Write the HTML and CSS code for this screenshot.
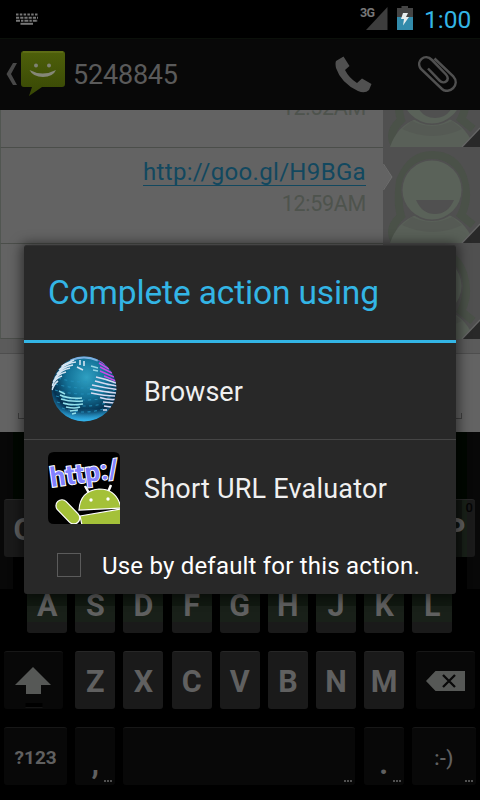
FILE: index.html
```html
<!DOCTYPE html>
<html lang="en">
<head>
<meta charset="utf-8">
<title>Complete action using</title>
<link rel="stylesheet" href="styles.css">
</head>
<body>
<svg width="0" height="0" class="defs">
  <symbol id="avatar" viewBox="0 0 97 96">
    <rect width="97" height="96" fill="#505050"/>
    <path d="M12 94Q4 82 18 69Q14 56 17 34Q27 8 49 8Q72 8 80 30Q87 51 78 68L90 78" fill="none" stroke="#4a5148" stroke-width="8"/>
    <path d="M7 96Q14 75 33 68H66Q84 76 91 96Z" fill="#596058"/>
    <path d="M29 70Q49 80 69 70L79 78Q50 92 19 78Z" fill="#555a54"/>
    <circle cx="49" cy="43" r="31" fill="#505050"/>
    <circle cx="49" cy="43" r="29.5" fill="#5a6259"/>
    <path d="M33 53H71Q65 67 52 67Q39 67 33 53Z" fill="#505050"/>
    <path d="M79 96L97 77V96Z" fill="#292929"/>
    <path d="M79 96L97 77" stroke="#656565" stroke-width="1.3"/>
  </symbol>
</svg>
<div class="screen">
  <header class="status">
    <svg class="kbd-icon" width="22" height="12" viewBox="0 0 22 12" stroke="#777" stroke-width="2" fill="none">
      <path d="M0 1.5H22" stroke-dasharray="2.5 1.3"/><path d="M0 4.7H22" stroke-dasharray="3.2 1"/><path d="M0 7.8H22" stroke-dasharray="4 1 2.4 1"/><path d="M4.5 10.8H17"/>
    </svg>
    <div class="signal"><span class="net">3G</span><svg width="22" height="23" viewBox="0 0 22 23"><path d="M0 23L21.500 0V23Z" fill="#3d3d3d"/></svg></div>
    <svg class="battery" width="16" height="24" viewBox="0 0 16 24">
      <path d="M0 2H4.500V0H11V2H16V12H0Z" fill="#444"/><path d="M0 11H16V24H0Z" fill="#328bab"/>
      <path d="M6 7H11L9 11H12L6 19.500L7 13H4Z" fill="#e8eeee"/>
    </svg>
    <span class="clock">1:00</span>
  </header>
  <nav class="bar">
    <svg class="back" width="12" height="22" viewBox="0 0 12 22"><path d="M7 0H11L5 11L11 22H7L0.500 11Z" fill="#484848"/></svg>
    <svg class="msg" width="44" height="46" viewBox="0 0 44 46">
      <defs><linearGradient id="mg" x2="0" y2="1"><stop stop-color="#4e600a"/><stop offset="1" stop-color="#384705"/></linearGradient></defs>
      <path d="M3 0H41Q44 0 44 3V33Q44 36 41 36H21L8 45L11 36H3Q0 36 0 33V3Q0 0 3 0Z" fill="url(#mg)"/>
      <path d="M2 1H42" stroke="#6c7821"/>
      <circle cx="15" cy="14.500" r="2" fill="#7f8274"/><circle cx="28" cy="14.500" r="2" fill="#7f8274"/>
      <path d="M8.500 19Q21.500 26 35 19Q32 26 22 26Q12 26 8.500 19Z" fill="#858777"/>
    </svg>
    <span class="number">5248845</span>
    <svg class="phone" width="37" height="37" viewBox="0 0 37 37"><path d="M1 5L8.500 0.500L14.500 10L10 14Q14 22 22 27L27 22.500L36.500 28L34 34Q30 38 23 35Q6 27 1 12Q0 7 1 5Z" fill="#505050"/></svg>
    <svg class="clip" width="39" height="36" viewBox="0 0 39 36"><path d="M16.500 2.500L35 20C43 29 31 39 24 33L3 13C-3 5 7 -3 14 4L28 18.500C33 24 26 29 21.500 24.500L10 12.500" fill="none" stroke="#505050" stroke-width="2.500"/></svg>
  </nav>
  <main class="thread">
    <section class="row first"><div class="text"><time>12:52AM</time></div><svg class="avatar"><use href="#avatar"/></svg></section>
    <section class="row"><div class="text"><a>http://goo.gl/H9BGa</a><time>12:59AM</time></div><svg class="avatar"><use href="#avatar"/></svg><svg class="notch" width="10" height="26" viewBox="0 0 10 26"><path d="M0 0L9 13L0 26Z" fill="#636363"/><path d="M0.500 0L9 13L0.500 26" fill="none" stroke="#747474" stroke-width=".8"/></svg></section>
    <section class="row last"><div class="text"></div><svg class="avatar"><use href="#avatar"/></svg></section>
    <div class="compose"><i class="field"></i></div>
  </main>
  <section class="keyboard">
    <div class="suggest"></div>
    <div class="keys r1"><b>Q</b><b>W</b><b>E</b><b>R</b><b>T</b><b>Y</b><b>U</b><b>I</b><b>O</b><b class="p">P<small>0</small></b></div>
    <div class="keys r2"><b>A</b><b>S</b><b>D</b><b>F</b><b>G</b><b>H</b><b>J</b><b>K</b><b>L</b></div>
    <div class="keys r3"><b class="dark shift"><svg width="36" height="42" viewBox="0 0 36 42"><path d="M18 1L36 19H26V28H11V19H0Z" fill="#565856"/><path d="M10.500 37H27.500V41H10.500Z" fill="#000"/><path d="M10.500 41.500H27.500" stroke="#151515"/></svg></b><b>Z</b><b>X</b><b>C</b><b>V</b><b>B</b><b>N</b><b>M</b><b class="dark del"><svg width="39" height="20" viewBox="0 0 39 20"><path d="M0 10L9.500 0H39V20H9.500Z" fill="#565856"/><path d="M17 4L29 16M29 4L17 16" stroke="#080808" stroke-width="2.300"/></svg></b></div>
    <div class="keys r4"><b class="dark sym">?123</b><b class="dark punct">,<em></em></b><b class="dark space"><em></em></b><b class="dark punct">.<em></em></b><b class="dark smile">:-)<em></em></b></div>
  </section>
  <div class="dialog" role="dialog">
    <h1>Complete action using</h1>
    <div class="option">
      <svg width="72" height="72" viewBox="0 0 72 72">
        <defs><radialGradient id="globe" cx=".54" cy=".32" r=".68"><stop stop-color="#2fa0c2"/><stop offset=".45" stop-color="#137298"/><stop offset=".8" stop-color="#05304f"/><stop offset="1" stop-color="#1d7fb0"/></radialGradient>
        <linearGradient id="lo" x2="0" y2="1"><stop offset=".8" stop-color="#2ca6de" stop-opacity="0"/><stop offset="1" stop-color="#36b6ed"/></linearGradient>
        <clipPath id="gc"><circle cx="36" cy="36" r="32.500"/></clipPath></defs>
        <circle cx="36" cy="36" r="32.500" fill="url(#globe)"/>
        <g clip-path="url(#gc)" fill="none">
          <path d="M10 25Q36 33 63 25M7 31Q36 39 66 31M7 37Q36 45 67 37M8 43Q36 51 66 43M9 49Q36 57 62 49M14 55Q36 63 58 55" stroke="#2491bc" stroke-width="1.100" stroke-dasharray="3 3.500" opacity=".8"/>
          <circle cx="36" cy="36" r="32.500" fill="url(#lo)"/>
          <path d="M22 7Q36 1 50 7" stroke="#7fb0e0" stroke-width="3"/>
          <path d="M13 13L26 7M11 17Q18 10 28 9M9 21Q14 14 25 12M7 25Q12 17 22 15M5 29Q9 21 18 19M4 33Q7 25 14 23M4 37Q6 31 10 28M29 14L35 17M32 7V12M36 8V13" stroke="#d3e4f2" stroke-width="1.600"/>
          <path d="M11 38L17 41M12 42Q20 46 34 45M13 46Q22 49 35 48M15 50Q24 53 35 51M18 54Q27 56 32 54M22 58L30 57M24 61L28 60" stroke="#93dfea" stroke-width="1.500"/>
          <path d="M48 24Q58 26 68 30M47 28Q57 31 69 33M44 32Q57 35 69 36.500M42 36Q57 39 68 40M43 40Q57 43 67 43M52 44.500Q59 47 67 46.500M55 49L66 50M56 53L63 54M55 57L59 57" stroke="#d6dbf2" stroke-width="1.600"/>
          <path d="M50 6L57 11M51 10L61 16M52 14L64 20M52 18L66 24M56 23L68 28" stroke="#c74be6" stroke-width="1.600"/>
          <path d="M43 13L50 15M45 17L50 18" stroke="#93d6e5" stroke-width="1.400"/>
        </g>
      </svg><span>Browser</span></div>
    <div class="option second">
      <svg width="72" height="72" viewBox="0 0 72 72">
        <defs><clipPath id="ac"><path d="M6 0H66Q72 0 72 6V72H6Q0 72 0 66V6Q0 0 6 0Z"/></clipPath></defs>
        <g clip-path="url(#ac)"><rect width="72" height="72" fill="#000"/>
        <text class="http" transform="translate(3.500 35) rotate(-8)">http:/</text>
        <g stroke="#fff" stroke-width="1.200" fill="#a4c139"><path d="M37 34L41 41M63 33L60 40" stroke-width="2.500"/><path d="M31 58Q32 39 51 37Q69 37 73 56Z"/><path d="M32 64L73 57V73H34Z"/><rect x="-6" y="-14" width="12" height="29" rx="6" transform="translate(19.500 59.500) rotate(-44)"/></g>
        <circle cx="43" cy="48" r="1.700" fill="#fff"/><circle cx="60" cy="47" r="1.700" fill="#fff"/></g>
      </svg><span>Short URL Evaluator</span></div>
    <label class="default"><i></i><span>Use by default for this action.</span></label>
  </div>
</div>
</body>
</html>
```
FILE: styles.css
```css
* { box-sizing: border-box; }
body { margin: 0; background: #000; font-family: Roboto, "Liberation Sans", sans-serif; }
.defs { position: absolute; }
svg { display: block; flex: none; }
.screen { position: relative; width: 480px; height: 800px; overflow: hidden; display: flex; flex-direction: column; }

.status { height: 38px; display: flex; align-items: flex-start; }
.kbd-icon { margin: 13px auto 0 16px; }
.signal { position: relative; margin: 7px 9px 0 0; }
.net { position: absolute; left: -6px; top: -2px; font-size: 12.5px; line-height: 15px; font-weight: 700; letter-spacing: -.7px; color: #777; }
.battery { margin-top: 6px; }
.clock { width: 47px; margin: 5px 9px 0 11px; font-size: 24.5px; line-height: 30px; color: #33b5e5; white-space: nowrap; }

.bar { height: 72px; background: #080808; border-top: 1px solid #0b100a; display: flex; align-items: flex-start; }
.back { margin: 24px 4px 0 6px; }
.msg { margin: 12px 8px 0 -1px; }
.number { flex: 1; margin-top: 20px; font-size: 27px; line-height: 32px; letter-spacing: -.2px; color: #5a5a5a; }
.phone { margin: 17px 46px 0 0; }
.clip { margin: 17px 23px 0 0; }

.thread { height: 322px; background: #636363; overflow: hidden; }
.row { position: relative; height: 96px; display: flex; }
.row.first { margin-top: -59px; }
.text { flex: 1; padding: 12px 17px 0 0; border-left: 1px solid #515651; border-top: 1px solid #4b4e4a; text-align: right; font-size: 21.5px; line-height: 31px; }
.row.last .text { border-bottom: 1px solid #4b4e4a; }
.text a { display: block; margin-left: auto; width: max-content; font-size: 24px; line-height: 25px; letter-spacing: .33px; color: #12485f; border-bottom: 1px solid #12485f; }
.text time { display: block; color: #4e534d; line-height: 36px; letter-spacing: -.3px; }
.row.first time { margin-top: 26px; }
.avatar { width: 97px; height: 96px; }
.notch { position: absolute; left: 383px; top: 17px; }
.compose { height: 93px; background: linear-gradient(#5b5b5b 14px, #4e4e4e 14px, #4e4e4e 15px, #636363 15px); padding: 74px 18px 0; }
.field { display: block; height: 6px; border: 1px solid #404040; border-top: 0; }

.keyboard { height: 368px; background: linear-gradient(90deg, #080808 13px, transparent 13px, transparent 467px, #080808 467px) 0 0 / 480px 157px no-repeat #000; color: #606060; }
.suggest { height: 67px; background: linear-gradient(90deg, transparent 13px, #000700 13px, #000700 467px, transparent 467px); }
.keys { display: flex; gap: 8.15px; height: 58px; margin-bottom: 18px; padding-left: 4.2px; }
.keys b { position: relative; width: 40px; height: 58px; flex: none; border-radius: 3px; border-top: 1px solid #272727; background: #1a1a1a; display: flex; align-items: center; justify-content: center; font-size: 30.5px; line-height: 36px; font-weight: 700; padding-top: 3px; }
.keys .dark { background: #080808; border-top-color: #171717; }
.r1 { gap: 8px; padding-left: 4px; }
.keys .p { width: 39px; background: linear-gradient(90deg, #111511 26px, #182018 26px, #182018 31px, #1a1a1a 31px); }
.r2 { padding-left: 27.2px; }
.r2 b { background: linear-gradient(#111911 30px, #192019 30px, #192019 46px, #1a1a1a 46px); }
.keys .shift { width: 59px; margin-right: 4px; padding-top: 12px; padding-right: 2px; }
.keys .del { width: 59px; margin-left: 4px; padding-top: 0; }
.keys .sym { width: 63px; font-size: 19px; }
.keys .space { width: 232px; }
.keys .smile { width: 64px; font-size: 20px; font-weight: 500; }
.keys .punct { padding-top: 14px; }
.keys em { position: absolute; right: 3px; bottom: 3px; width: 8px; height: 2px; background: repeating-linear-gradient(90deg, #505050 0 2px, transparent 2px 3px); }
.keys small { position: absolute; right: 2px; top: 0; font-size: 13px; line-height: 15px; font-weight: 500; color: #050505; }

.dialog { position: absolute; left: 24px; top: 245px; width: 432px; height: 349px; background: #282828; border-radius: 3px; box-shadow: 0 1px 12px 3px rgba(0, 0, 0, .5); color: #f0f0f0; border-top: 1px solid #303030; }
h1 { margin: 0; height: 97px; padding: 27px 0 0 24px; border-bottom: 3px solid #33b5e5; color: #33b5e5; font-size: 33.5px; line-height: 40px; font-weight: 400; letter-spacing: -.15px; white-space: nowrap; }
.option { height: 97px; padding: 10px 24px 0; display: flex; gap: 24px; border-bottom: 1px solid #454545; font-size: 27px; line-height: 32px; white-space: nowrap; }
.option span { padding-top: 23px; }
.option.second { height: 96px; padding-top: 12px; border: 0; letter-spacing: .22px; }
.option.second span { padding-top: 21px; }
.http { font: 700 27px Roboto, sans-serif; letter-spacing: .5px; fill: #8180ff; stroke: #fff; stroke-width: 2px; paint-order: stroke; }
.default { display: flex; padding: 15px 0 0 33px; gap: 21px; font-size: 24px; line-height: 30px; letter-spacing: .2px; white-space: nowrap; color: #fff; }
.default i { width: 24px; height: 24px; margin-top: 2px; border: 1px solid #5b5b5b; }
```
